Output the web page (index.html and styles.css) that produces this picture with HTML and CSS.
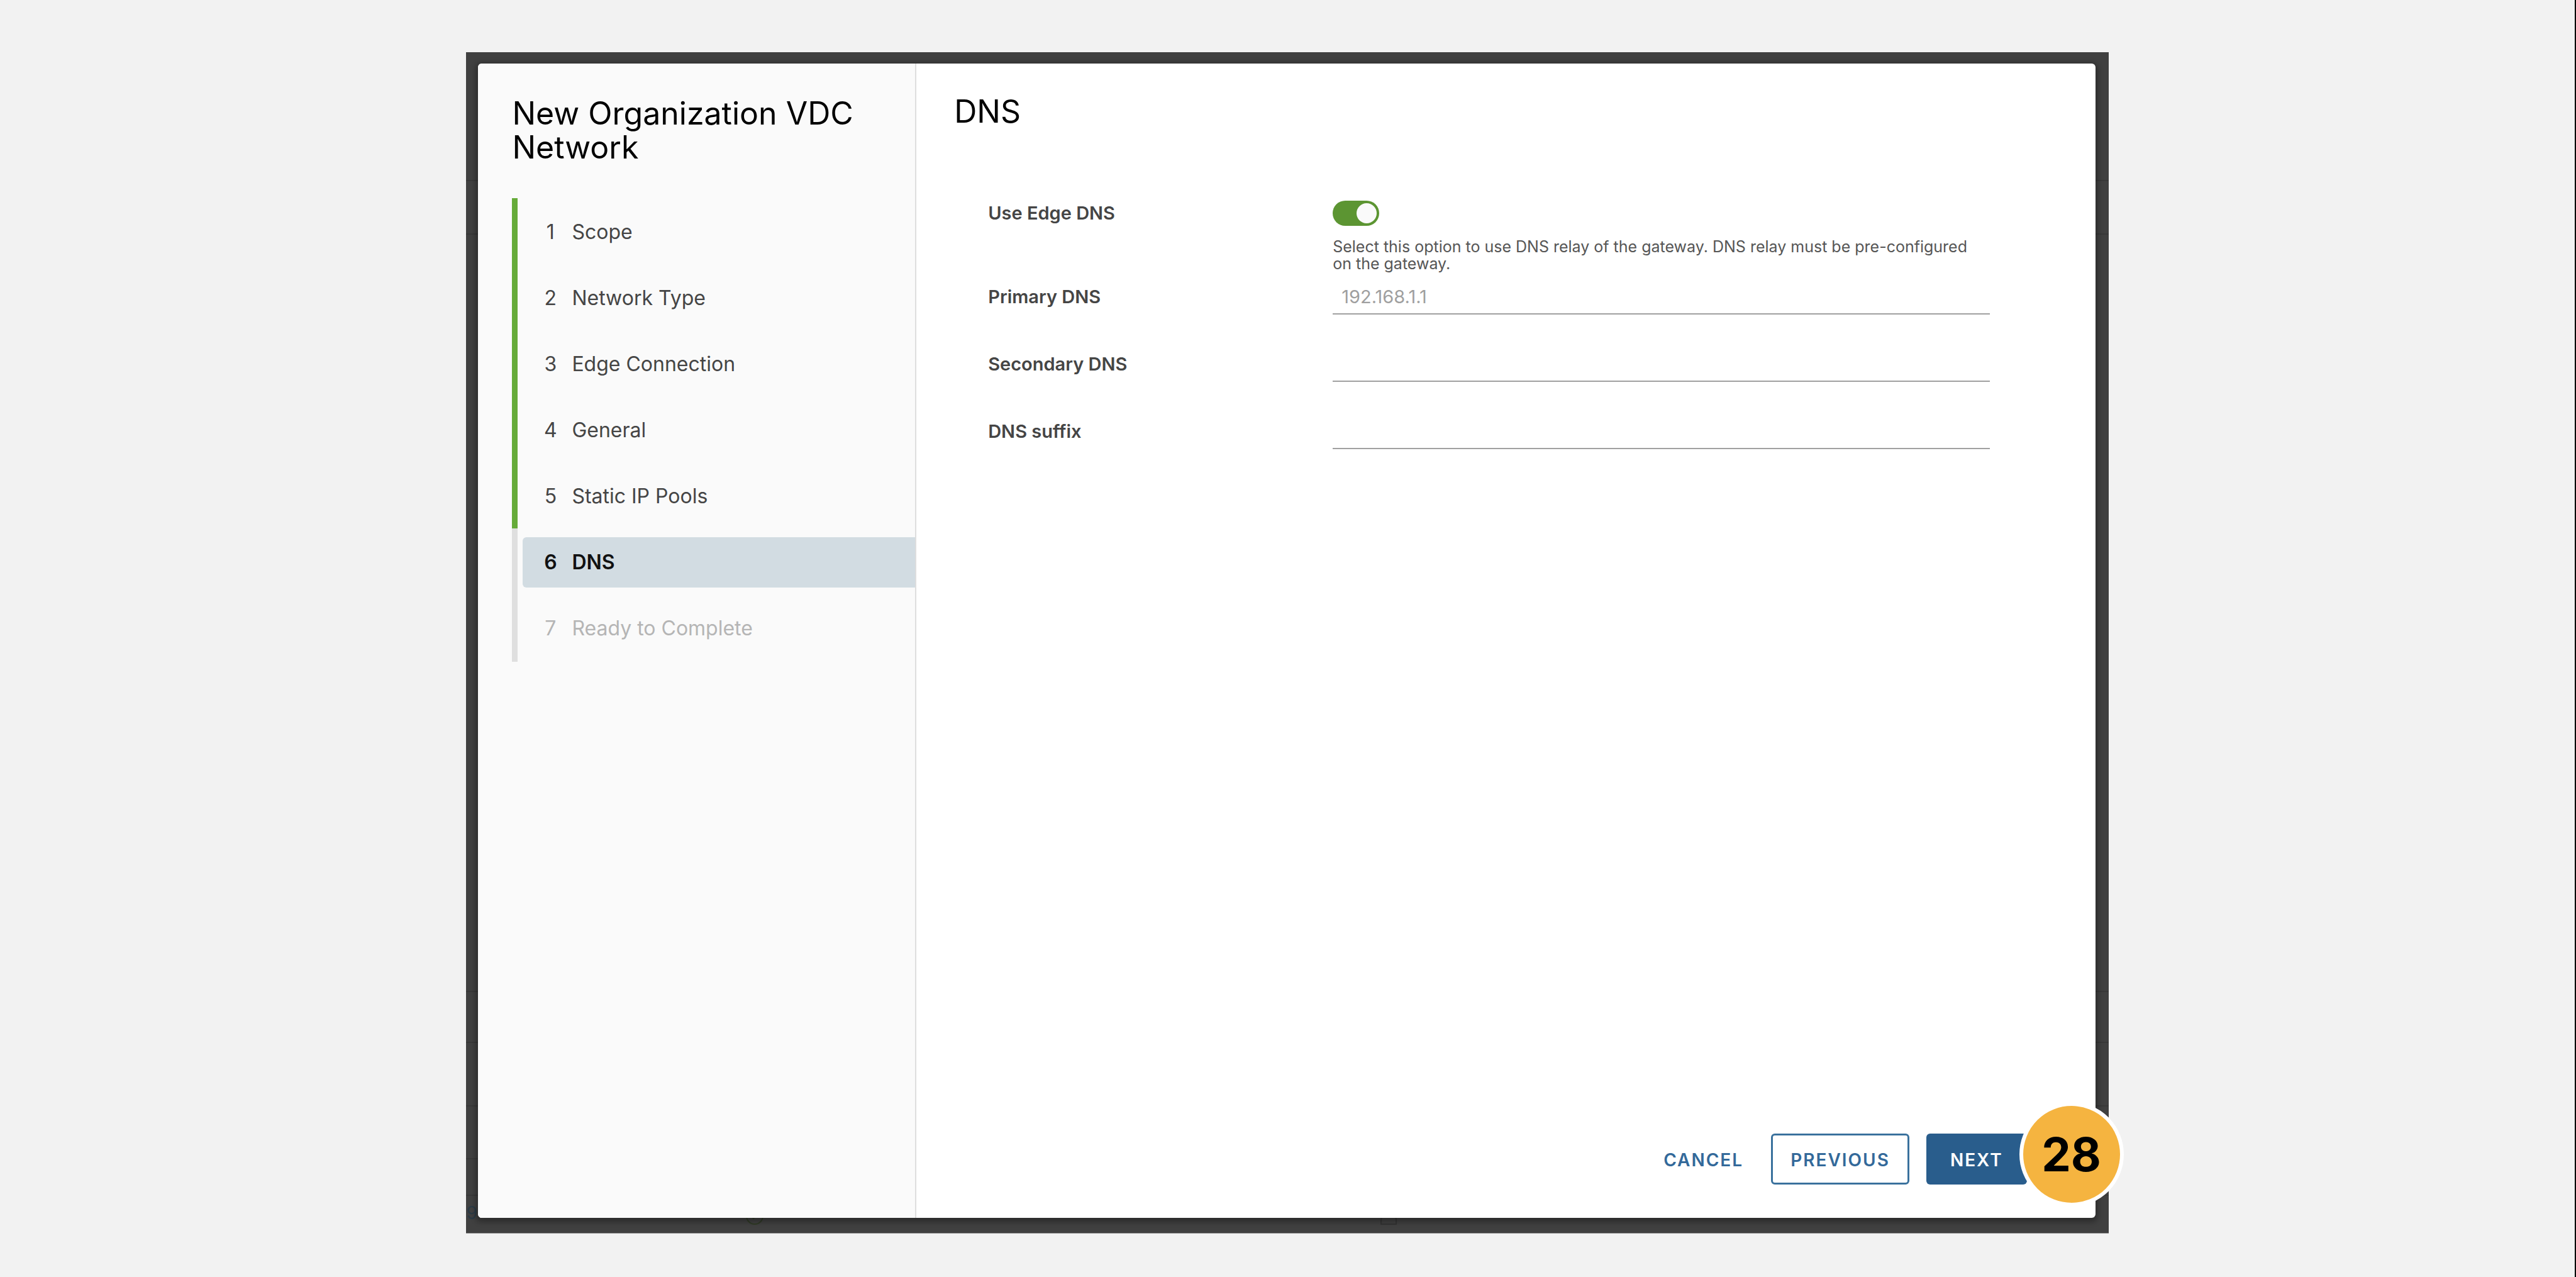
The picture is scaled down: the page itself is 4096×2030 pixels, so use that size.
FILE: index.html
```html
<!DOCTYPE html>
<html lang="en">
<head>
<meta charset="utf-8">
<title>New Organization VDC Network</title>
<link rel="stylesheet" href="styles.css">
</head>
<body>
<main class="page">
  <div class="backdrop">
    <div class="dimmed-row" aria-hidden="true">
      <span class="dimmed-name">9</span>
      <svg class="dimmed-icon ok" viewBox="0 0 30 30"><circle cx="15" cy="15" r="13"/><path d="M9 15l4 4 8-9"/></svg>
      <svg class="dimmed-icon user" viewBox="0 0 30 30"><circle cx="15" cy="8" r="6"/><path d="M3 28v-7q0-5 5-5h14q5 0 5 5v7z"/></svg>
    </div>
    <section class="wizard" role="dialog" aria-labelledby="wizard-title">
      <aside class="sidebar">
        <h1 class="wizard-title" id="wizard-title">New Organization VDC Network</h1>
        <ol class="steps">
          <li class="step done"><a class="step-link" href="#scope"><span class="num">1</span>Scope</a></li>
          <li class="step done"><a class="step-link" href="#type"><span class="num">2</span>Network Type</a></li>
          <li class="step done"><a class="step-link" href="#edge"><span class="num">3</span>Edge Connection</a></li>
          <li class="step done"><a class="step-link" href="#general"><span class="num">4</span>General</a></li>
          <li class="step done"><a class="step-link" href="#pools"><span class="num">5</span>Static IP Pools</a></li>
          <li class="step current"><a class="step-link" href="#dns" aria-current="step"><span class="num">6</span>DNS</a></li>
          <li class="step pending"><a class="step-link" href="#ready"><span class="num">7</span>Ready to Complete</a></li>
        </ol>
      </aside>
      <form class="content">
        <h2 class="content-title">DNS</h2>
        <div class="fields">
          <div class="field toggle-field">
            <label class="label" for="use-edge">Use Edge DNS</label>
            <div class="control">
              <input class="toggle" type="checkbox" id="use-edge" aria-describedby="edge-help" checked>
              <p class="help" id="edge-help">Select this option to use DNS relay of the gateway. DNS relay must be pre-configured on the gateway.</p>
            </div>
          </div>
          <div class="field text-field">
            <label class="label" for="primary">Primary DNS</label>
            <input class="text-input" type="text" id="primary" placeholder="192.168.1.1">
          </div>
          <div class="field text-field">
            <label class="label" for="secondary">Secondary DNS</label>
            <input class="text-input" type="text" id="secondary">
          </div>
          <div class="field text-field">
            <label class="label" for="suffix">DNS suffix</label>
            <input class="text-input" type="text" id="suffix">
          </div>
        </div>
        <footer class="actions">
          <button class="btn btn-link" type="button">CANCEL</button>
          <button class="btn btn-outline" type="button">PREVIOUS</button>
          <button class="btn btn-primary" type="button">NEXT</button>
        </footer>
      </form>
    </section>
    <span class="callout">28</span>
  </div>
</main>
</body>
</html>
```
FILE: styles.css
```css
* {
  box-sizing: border-box;
}

body {
  margin: 0;
  background: #f2f2f2;
  font-family: Inter, "Open Sans", sans-serif;
  color: #454545;
}

.page {
  display: flex;
  min-height: 100vh;
  padding: 83px 18.1% 69px;
  border-right: 2px solid #000;
}

/* the dimmed page behind the dialog, with its faint row lines */
.backdrop {
  --line: linear-gradient(#383838, #383838);
  position: relative;
  flex: 1;
  display: flex;
  padding: 18px 21px 24px 19px;
  border-bottom: 1px solid #999;
  background:
    var(--line) 0 203px / 100% 2px no-repeat,
    var(--line) 0 288px / 100% 2px no-repeat,
    var(--line) 0 1492px / 100% 2px no-repeat,
    var(--line) 0 1573px / 100% 2px no-repeat,
    var(--line) 0 1674px / 100% 2px no-repeat,
    var(--line) 0 1758px / 100% 2px no-repeat,
    var(--line) 0 1816px / 100% 2px no-repeat,
    #404040;
}

.dimmed-row {
  position: absolute;
  inset: auto 0 12px 0;
  height: 40px;
  overflow: hidden;
}

.dimmed-name {
  position: absolute;
  left: 0;
  bottom: 0;
  font-size: 28px;
  line-height: 40px;
  color: #2b3a45;
}

.dimmed-icon {
  position: absolute;
  bottom: 0;
  width: 30px;
  height: 30px;
  fill: none;
  stroke: #333;
  stroke-width: 2;
}

.dimmed-icon.ok {
  left: 17%;
  stroke: #2f3a26;
}

.dimmed-icon.user {
  left: 55.6%;
}

.wizard {
  position: relative;
  flex: 1;
  display: flex;
  border-radius: 6px;
  background: #fff;
  box-shadow: 0 3px 9px 4px rgba(0, 0, 0, 0.3);
  overflow: hidden;
}

.sidebar {
  flex: 0 0 27.1%;
  padding: 52px 0 0 54px;
  border-right: 2px solid #dedede;
  background: #fafafa;
}

.wizard-title,
.content-title {
  margin: 0;
  font-size: 50px;
  font-weight: 400;
  line-height: 54px;
  color: #000;
}

.steps {
  margin: 54px 0 0;
  padding: 0;
  list-style: none;
}

.step {
  padding: 14px 0 11px 8px;
  border-left: 9px solid #dfdfdf;
}

.step:last-child {
  padding-bottom: 13px;
}

.step.done {
  border-left-color: #66ab39;
}

.step-link {
  display: flex;
  align-items: center;
  height: 80px;
  padding-left: 32px;
  border-radius: 6px 0 0 6px;
  font-size: 32px;
  line-height: 40px;
  color: #454545;
  text-decoration: none;
}

.num {
  width: 24px;
  margin-right: 22px;
  text-align: center;
}

.current .step-link {
  background: #d2dce2;
  color: #111;
  font-weight: 600;
}

.pending .step-link {
  color: #b5b5b5;
}

.content {
  flex: 1;
  display: flex;
  flex-direction: column;
  padding: 49px 109px 53px 60px;
}

.fields {
  padding: 115px 59px 0 54px;
}

.field {
  display: grid;
  grid-template-columns: 548px 1fr;
}

.toggle-field {
  margin-bottom: 10px;
}

.text-field {
  margin-bottom: 50px;
}

.label {
  font-size: 29px;
  font-weight: 600;
  line-height: 40px;
}

.text-field .label {
  padding-top: 9px;
}

.control {
  display: flex;
  flex-direction: column;
}

.toggle {
  appearance: none;
  display: flex;
  justify-content: flex-end;
  width: 74px;
  height: 40px;
  margin: 0;
  padding: 4px;
  border-radius: 20px;
  background: #5c9532;
}

.toggle::before {
  content: "";
  width: 32px;
  height: 32px;
  border-radius: 50%;
  background: #fafafa;
}

.help {
  margin: 20px 0 0;
  padding-right: 30px;
  font-size: 25px;
  line-height: 27px;
  color: #565656;
}

.text-input {
  height: 57px;
  padding: 8px 14px 7px;
  border: 0;
  border-bottom: 2px solid #a0a0a0;
  border-radius: 0;
  background: transparent;
  font: 29px/40px Inter, "Open Sans", sans-serif;
  color: #454545;
}

.text-input::placeholder {
  color: #9f9f9f;
  opacity: 1;
}

.actions {
  display: flex;
  justify-content: flex-end;
  gap: 27px;
  margin-top: auto;
}

.btn {
  height: 81px;
  padding: 3px 28px 0;
  border: 3px solid transparent;
  border-radius: 6px;
  background: transparent;
  font: 600 28px/36px Inter, "Open Sans", sans-serif;
  letter-spacing: 2px;
  color: #33699a;
}

.btn-link {
  padding: 3px 14px 0;
}

.btn-outline {
  border-color: #3a719d;
}

.btn-primary {
  padding: 3px 35px 0;
  background: #295d8c;
  color: #fff;
}

.callout {
  position: absolute;
  right: -24px;
  bottom: 42px;
  display: flex;
  align-items: center;
  justify-content: center;
  width: 166px;
  height: 166px;
  border: 6px solid #fff;
  border-radius: 50%;
  background: #f5b440;
  font-size: 74px;
  font-weight: 700;
  color: #000;
}
```
